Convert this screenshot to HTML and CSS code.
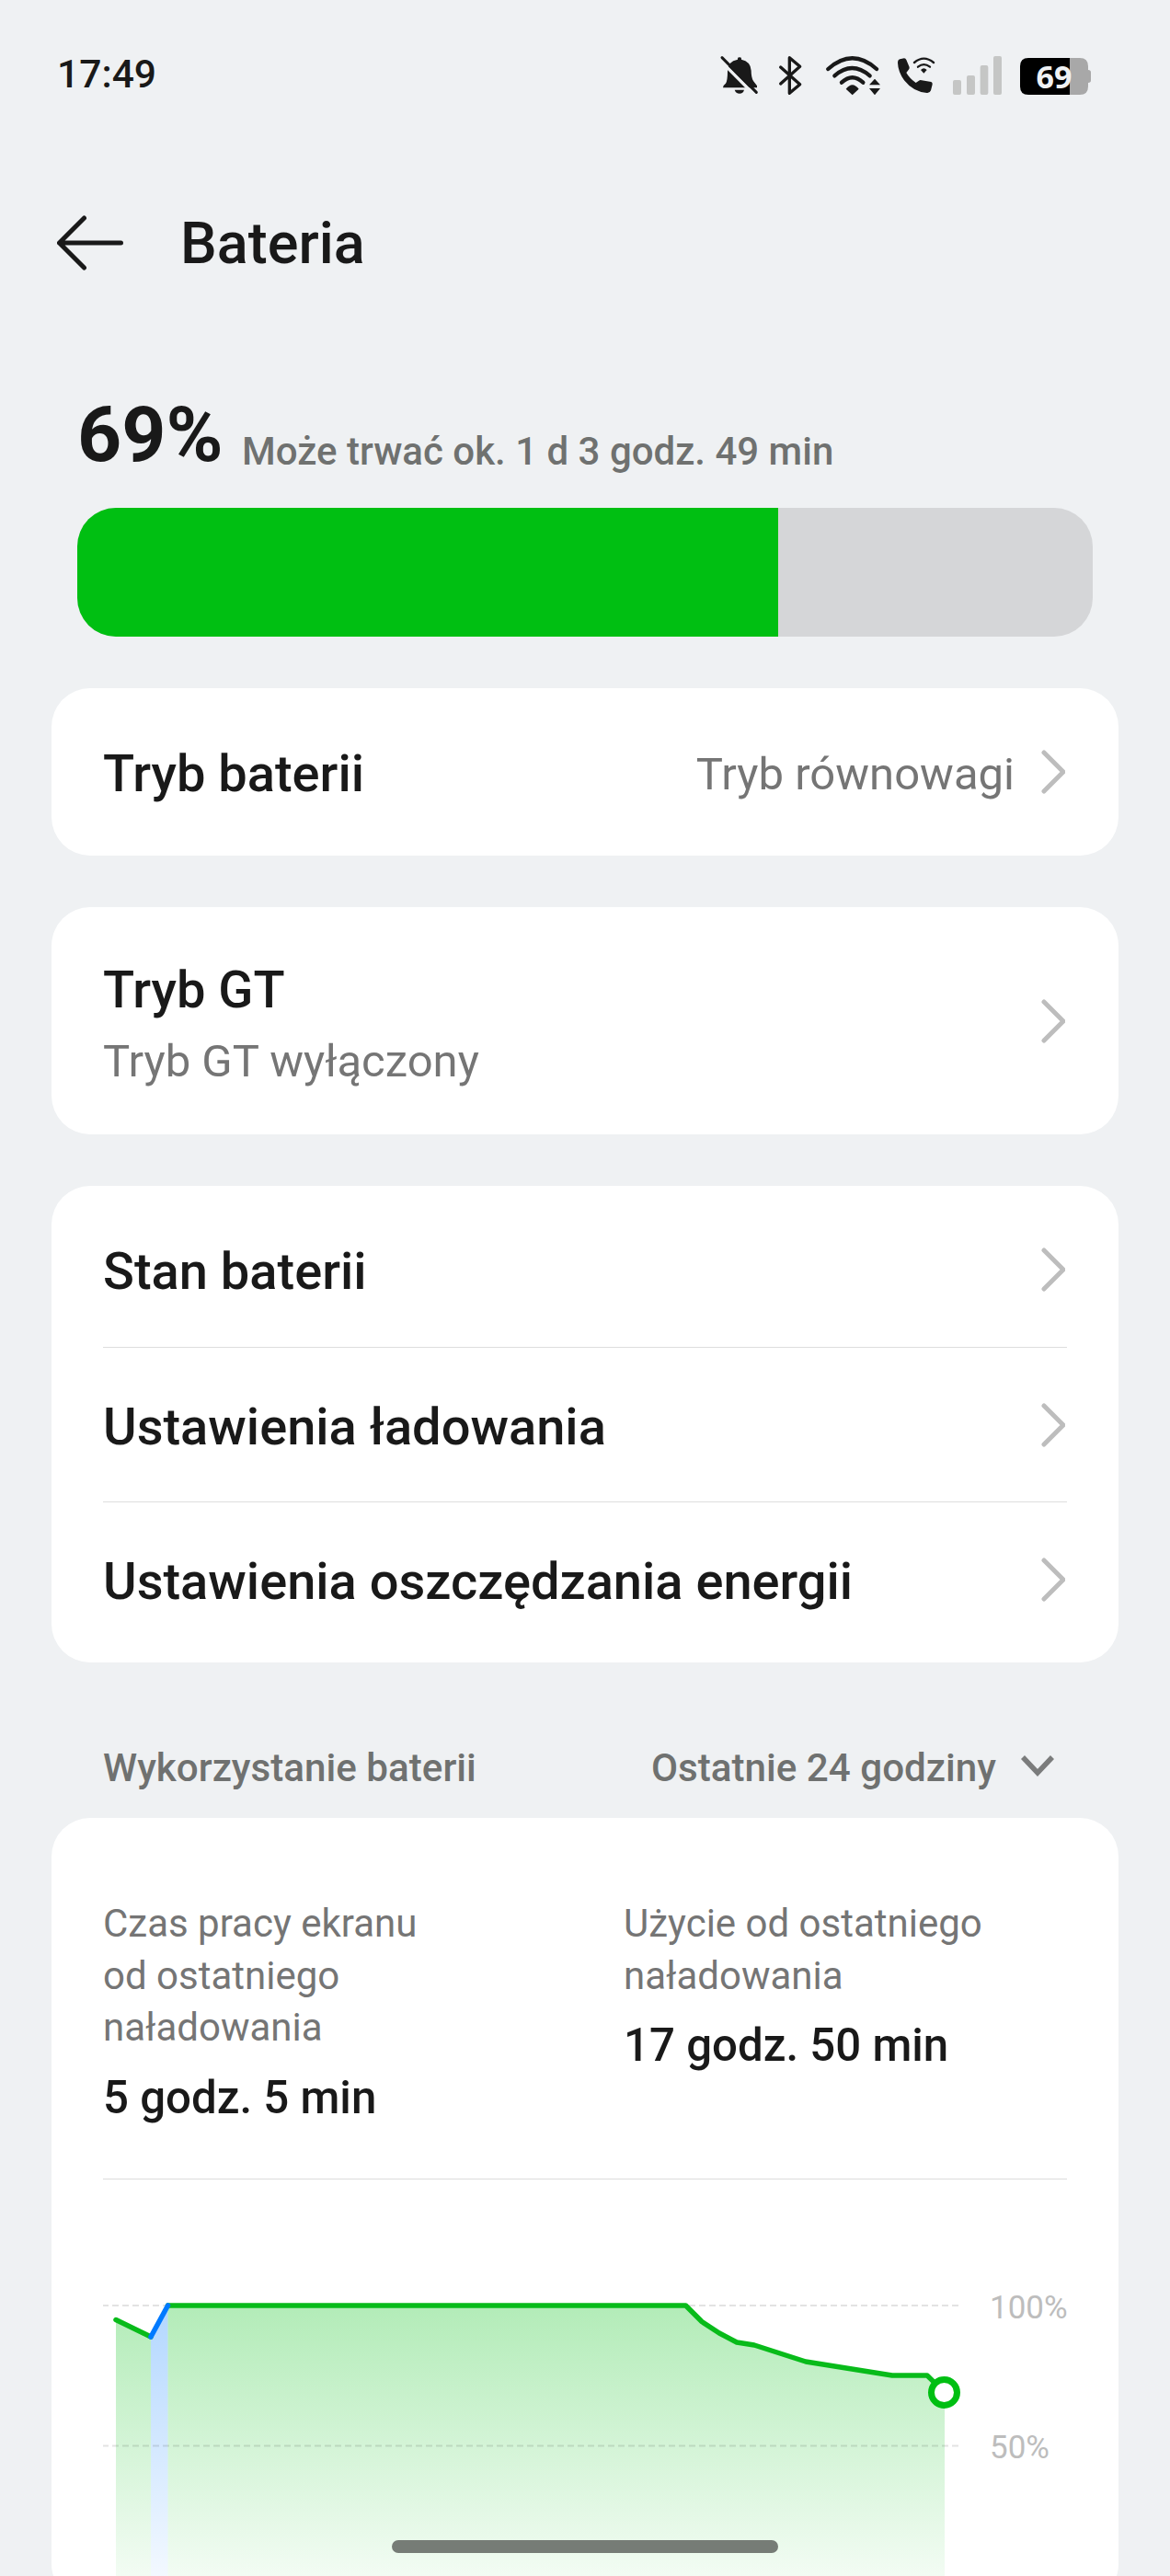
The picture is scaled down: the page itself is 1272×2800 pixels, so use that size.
FILE: index.html
```html
<!DOCTYPE html>
<html lang="pl">
<head>
    <meta charset="UTF-8">
    <meta name="viewport" content="width=device-width, initial-scale=1.0">
    <title>Bateria</title>
    <link rel="stylesheet" href="styles.css">
</head>
<body>
    <div class="screen">
        <div class="status-bar">
            <span class="time">17:49</span>
            <div class="status-icons">
                <!-- wyciszenie -->
                <svg class="icon-bell" viewBox="66 60 132 132">
                    <path fill="#191919" d="M126 74v-3q0-4 6-4t6 4v3q30 6 32 36 0 22 7 34l12 16v6H78q0-8 9-14 6-8 6-40 0-32 33-38z"/>
                    <path fill="#191919" d="M116 173h31q-3 12-15 12t-16-12z"/>
                    <path stroke="#eff1f3" stroke-width="10" d="M68 76l112 113"/>
                    <path stroke="#191919" stroke-width="9" stroke-linecap="round" d="M75 68l112 113"/>
                </svg>
                <!-- bluetooth -->
                <svg class="icon-bluetooth" viewBox="258 60 81 132">
                    <path fill="none" stroke="#191919" stroke-width="10" stroke-linecap="round" stroke-linejoin="round" d="M266 99l63 56-34 29V68l34 29-63 56"/>
                </svg>
                <!-- wifi -->
                <svg class="icon-wifi" viewBox="408 60 186 132">
                    <g fill="none" stroke="#191919" stroke-width="13" stroke-linecap="round">
                        <path d="M421 105q79-70 158 0"/>
                        <path d="M442 127q57-50 115 0"/>
                        <path d="M465 149q35-32 70 0"/>
                    </g>
                    <path fill="#191919" d="M479 170q21-27 42 0l-21 20zM573 137l18 20h-36zM573 190l18-22h-36z"/>
                </svg>
                <!-- rozmowy przez wifi -->
                <svg class="icon-call" viewBox="645 60 126 132">
                    <path fill="#191919" d="M655 73l14-3q5 0 7 5l10 24q1 5-3 9l-7 9q10 18 31 33l10-7q4-3 9-1l31 5q5 2 4 8l-5 20q-3 9-13 8-44-3-74-41-20-28-21-57 0-10 7-12z"/>
                    <g fill="none" stroke="#191919" stroke-width="7" stroke-linecap="round">
                        <path d="M702 84q31-26 63 0"/>
                        <path d="M714 98q19-15 39 0"/>
                    </g>
                    <path fill="#191919" d="M723 108q10-11 20 0l-10 11z"/>
                </svg>
                <!-- sygnal -->
                <svg class="icon-signal" viewBox="828 60 162 132" fill="#c5c6c5">
                    <rect x="828" y="141" width="27" height="48" rx="6"/>
                    <rect x="873" y="126" width="27" height="63" rx="6"/>
                    <rect x="917" y="93" width="26" height="96" rx="6"/>
                    <rect x="960" y="63" width="27" height="126" rx="6"/>
                </svg>
                <!-- bateria -->
                <svg class="icon-battery" viewBox="1044 60 237 132">
                    <path fill="#a8a8a8" d="M1209 69h33q27 0 27 27v12q9 0 9 8v26q0 8-9 8v12q0 27-27 27h-33z"/>
                    <path d="M1209 69h-135q-27 0-27 27v66q0 27 27 27h135z"/>
                    <text x="1158" y="167" text-anchor="middle">69</text>
                </svg>
            </div>
        </div>

        <div class="header">
            <svg class="icon-back" viewBox="0 0 72 60">
                <path d="M29.5 3L2.5 30l27 27M2.5 30h67"/>
            </svg>
            <h1>Bateria</h1>
        </div>

        <div class="level">
            <span class="percent">69%</span>
            <span class="remaining">Może trwać ok. 1 d 3 godz. 49 min</span>
        </div>
        <div class="level-bar"><div class="level-fill" style="width: 69%"></div></div>

        <div class="card">
            <div class="row mode">
                <span class="name">Tryb baterii</span>
                <span class="value">Tryb równowagi</span>
                <svg class="arrow" viewBox="0 0 26 48"><path d="M3 3l21 21L3 45"/></svg>
            </div>
        </div>

        <div class="card">
            <div class="row gt">
                <div class="name">Tryb GT<span class="sub">Tryb GT wyłączony</span></div>
                <svg class="arrow" viewBox="0 0 26 48"><path d="M3 3l21 21L3 45"/></svg>
            </div>
        </div>

        <div class="card list">
            <div class="row">
                <span class="name">Stan baterii</span>
                <svg class="arrow" viewBox="0 0 26 48"><path d="M3 3l21 21L3 45"/></svg>
            </div>
            <div class="row">
                <span class="name">Ustawienia ładowania</span>
                <svg class="arrow" viewBox="0 0 26 48"><path d="M3 3l21 21L3 45"/></svg>
            </div>
            <div class="row">
                <span class="name">Ustawienia oszczędzania energii</span>
                <svg class="arrow" viewBox="0 0 26 48"><path d="M3 3l21 21L3 45"/></svg>
            </div>
        </div>

        <div class="section-title">
            <span>Wykorzystanie baterii</span>
            <div class="range">
                <span>Ostatnie 24 godziny</span>
                <svg class="icon-down" viewBox="0 0 36 24"><path d="M2 3l16 17L34 3"/></svg>
            </div>
        </div>

        <div class="card usage">
            <div class="stats">
                <div class="stat">
                    <p>Czas pracy ekranu<br>od ostatniego<br>naładowania</p>
                    <strong>5 godz. 5 min</strong>
                </div>
                <div class="stat">
                    <p>Użycie od ostatniego<br>naładowania</p>
                    <strong>17 godz. 50 min</strong>
                </div>
            </div>
            <svg class="chart" viewBox="112 2369 1058 460">
                <defs>
                    <linearGradient id="green" gradientUnits="userSpaceOnUse" x1="0" y1="2506" x2="0" y2="2811">
                        <stop offset="0" stop-color="#00bf12" stop-opacity=".3"/>
                        <stop offset="1" stop-color="#00bf12" stop-opacity=".04"/>
                    </linearGradient>
                    <linearGradient id="blue" gradientUnits="userSpaceOnUse" x1="0" y1="2506" x2="0" y2="2811">
                        <stop offset="0" stop-color="#007aff" stop-opacity=".3"/>
                        <stop offset="1" stop-color="#007aff" stop-opacity=".04"/>
                    </linearGradient>
                </defs>
                <path fill="url(#green)" d="M126 2521l38 19v271h-38z"/>
                <path fill="url(#blue)" d="M164 2540l18.5-34v305H164z"/>
                <path fill="url(#green)" d="M182.5 2506H745.5L763 2523.5L782 2536L801 2546L820 2549L876 2567L970 2582H1008L1027 2600.5V2811H182.5z"/>
                <path class="grid" d="M111 2506h931M111 2658.5h931"/>
                <path class="line" d="M126 2521.5L164 2540"/>
                <path class="line" d="M182.5 2506H745.5L763 2523.5L782 2536L801 2546L820 2549L876 2567L970 2582H1008L1027 2600.5"/>
                <path class="line charging" d="M164 2540L182.5 2506"/>
                <circle cx="1026.5" cy="2600.5" r="14" fill="#fff" stroke="#00bf12" stroke-width="7"/>
                <text x="1076" y="2520">100%</text>
                <text x="1076" y="2672">50%</text>
                <text x="1076" y="2825">0%</text>
            </svg>
        </div>

        <div class="home-bar"></div>
    </div>
</body>
</html>
```
FILE: styles.css
```css
* {
    box-sizing: border-box;
}
body {
    margin: 0;
    background-color: #eff1f3;
    color: #191919;
    font-family: Roboto, "Noto Sans", sans-serif;
}
svg {
    display: block;
    flex-shrink: 0;
}
.screen {
    position: relative;
    width: 1272px;
    height: 2800px;
    padding: 0 56px;
    overflow: hidden;
}

/* pasek stanu */
.status-bar {
    display: flex;
    justify-content: space-between;
    height: 164px;
    padding: 60px 29px 0 6px;
}
.time {
    margin-top: -4px;
    font-size: 42.6px;
    line-height: 48px;
    font-weight: 500;
}
.status-icons {
    display: flex;
}
.status-icons svg {
    height: 44px;
}
.icon-bell {
    width: 44px;
    margin-right: 20px;
}
.icon-bluetooth {
    width: 27px;
    margin-right: 23px;
}
.icon-wifi {
    width: 62px;
    margin-right: 17px;
}
.icon-call {
    width: 42px;
    margin-right: 19px;
}
.icon-signal {
    width: 54px;
    margin-right: 18px;
}
.icon-battery {
    width: 79px;
}
.icon-battery text {
    fill: #eff1f3;
    font-family: "Noto Sans", sans-serif;
    font-size: 102px;
    font-weight: 700;
}

.header {
    display: flex;
    align-items: center;
    gap: 62px;
    height: 200px;
    padding: 0 6px;
}
.header h1 {
    margin: 0;
    padding-top: 2px;
    font-size: 63px;
    line-height: 72px;
    font-weight: 500;
}
.icon-back {
    width: 72px;
    height: 60px;
}
.icon-back path {
    fill: none;
    stroke: #191919;
    stroke-width: 5;
    stroke-linecap: round;
    stroke-linejoin: round;
}

/* poziom baterii */
.level {
    display: flex;
    align-items: flex-end;
    height: 188px;
    padding: 0 28px 36px;
}
.percent {
    width: 179px;
    padding-bottom: 3px;
    font-size: 84px;
    line-height: 80px;
    font-weight: 700;
}
.remaining {
    font-size: 42px;
    line-height: 50px;
    font-weight: 500;
    color: #6f7170;
}
.level-bar {
    height: 140px;
    margin: 0 28px 56px;
    border-radius: 42px;
    background-color: #d5d6d8;
    overflow: hidden;
}
.level-fill {
    height: 100%;
    background-color: #00bf12;
}

.card {
    margin-bottom: 56px;
    padding: 0 56px;
    border-radius: 42px;
    background-color: #fff;
}
.row {
    display: flex;
    align-items: center;
    height: 168px;
}
.row.mode {
    height: 182px;
}
.row.gt {
    height: 247px;
}
.list {
    padding-top: 7px;
    padding-bottom: 7px;
}
.list .row + .row {
    border-top: 1px solid #dedede;
}
.name {
    flex: 1;
    padding-top: 4px;
    font-size: 56px;
    line-height: 66px;
    font-weight: 500;
}
.gt .name {
    padding-top: 13px;
}
.sub {
    display: block;
    margin-top: 10px;
    font-size: 49px;
    line-height: 70px;
    font-weight: 400;
    color: #757575;
}
.value {
    margin-right: 29px;
    padding-top: 4px;
    font-size: 49px;
    color: #757575;
}
.arrow {
    width: 26px;
    height: 48px;
    margin-right: 2px;
}
.arrow path {
    fill: none;
    stroke: #bdbdbd;
    stroke-width: 5;
    stroke-linecap: round;
    stroke-linejoin: round;
}

.section-title {
    display: flex;
    justify-content: space-between;
    height: 113px;
    padding: 34px 70px 0 56px;
    font-size: 42.2px;
    line-height: 50px;
    font-weight: 500;
    color: #6f7170;
}
.range {
    display: flex;
    gap: 27px;
}
.icon-down {
    width: 36px;
    height: 24px;
    margin-top: 10px;
}
.icon-down path {
    fill: none;
    stroke: #7b7c7c;
    stroke-width: 5.5;
}

/* wykres zuzycia */
.stats {
    display: grid;
    grid-template-columns: 566px 1fr;
    height: 393px;
    padding-top: 87px;
    border-bottom: 1px solid #dcdcdc;
}
.stat p {
    margin: 0;
    font-size: 42px;
    line-height: 56.5px;
    color: #757575;
}
.stat strong {
    display: block;
    margin-top: 17px;
    font-size: 49.2px;
    line-height: 60px;
    font-weight: 500;
}
.chart {
    width: 1058px;
    height: 460px;
}
.chart .grid {
    stroke: #000;
    stroke-opacity: .11;
    stroke-width: 2;
    stroke-dasharray: 7 4;
}
.chart .line {
    fill: none;
    stroke: #08bb1a;
    stroke-width: 5.5;
    stroke-linecap: round;
    stroke-linejoin: round;
}
.chart .line.charging {
    stroke: #007aff;
}
.chart text {
    fill: #bdbdbd;
    font-size: 35px;
}

.home-bar {
    position: absolute;
    left: 426px;
    bottom: 25px;
    width: 420px;
    height: 14px;
    border-radius: 7px;
    background-color: #767c76;
}
```
